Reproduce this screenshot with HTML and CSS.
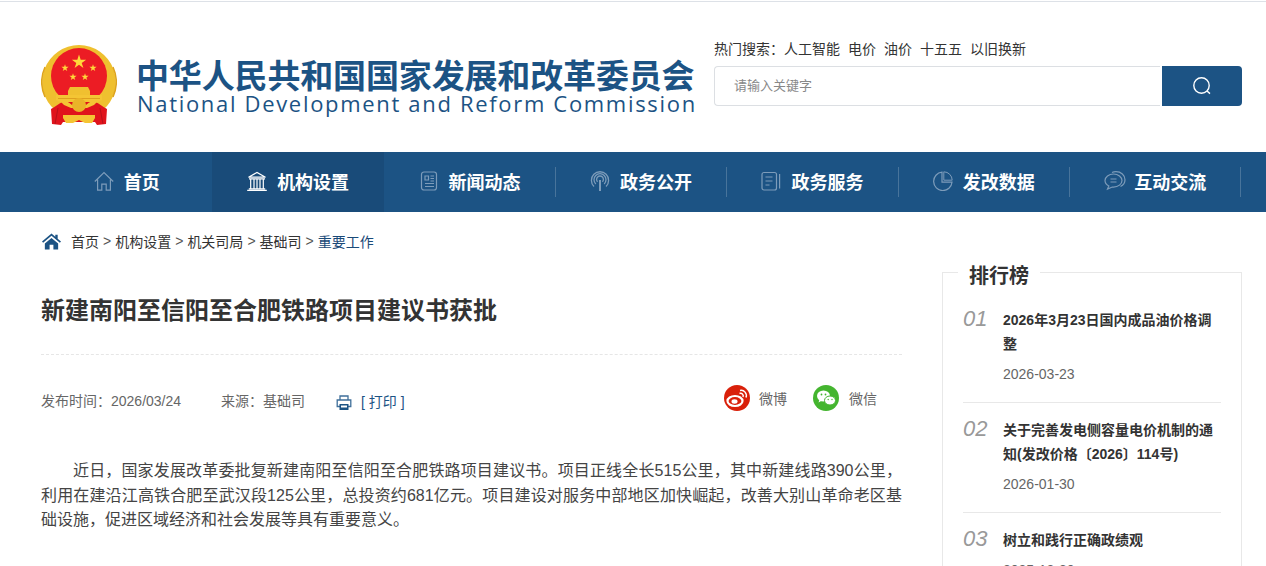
FILE: index.html
```html
<!DOCTYPE html>
<html lang="zh-CN">
<head>
<meta charset="utf-8">
<title>新建南阳至信阳至合肥铁路项目建议书获批</title>
<link rel="stylesheet" href="styles.css">
</head>
<body>
<header class="header">
  <div class="wrap header-in">
    <div class="logo">
      <svg class="emblem" viewBox="0 0 76 82" width="76" height="82">
        <defs><polygon id="st" points="0,-1 .225,-.309 .951,-.309 .363,.118 .588,.809 0,.382 -.588,.809 -.363,.118 -.951,-.309 -.225,-.309"/></defs>
        <path fill="#efc02f" d="M38 0a37 37 0 0 1 24 65H14A37 37 0 0 1 38 0z"/>
        <path d="M4 52a37 37 0 0 1 0-30M72 22a37 37 0 0 1 0 30" fill="none" stroke="#dda31c" stroke-width="1.500"/>
        <circle cx="38" cy="31" r="28" fill="#ec1c24"/>
        <use href="#st" fill="#ffd83a" transform="translate(38 17) scale(7.500)"/>
        <use href="#st" fill="#ffd83a" transform="translate(24 23) scale(3.800)"/>
        <use href="#st" fill="#ffd83a" transform="translate(52 23) scale(3.800)"/>
        <use href="#st" fill="#ffd83a" transform="translate(32 32) scale(3.800)"/>
        <use href="#st" fill="#ffd83a" transform="translate(44 32) scale(3.800)"/>
        <path fill="#f0c030" d="M27 50v-4l2-4h18l2 4v4z"/>
        <path fill="#f4c534" d="M15 50h46v5l-4 2H19l-4-2z"/>
        <path fill="#de9f1f" d="M17 53h42v1H17z"/>
        <path fill="#e0141c" d="M10 64c4-2 8-6 12-7h32c4 1 8 5 12 7l-1 15-9 1-2-3H22l-2 3-9-1z"/>
        <path fill="#b8111a" d="M17 63l-3 16M59 63l3 16" stroke="#b8111a" stroke-width="1"/>
        <path fill="#f4c534" d="M19 56c7-1 9 2 12 4h14c3-2 5-5 12-4l-4 4-7 3H30l-7-3z"/>
        <circle cx="38" cy="60" r="7" fill="#eab428"/>
        <path fill="#f4c534" d="M22 70h32v3l-3 5H44l-6-3-6 3h-7l-3-5z"/>
      </svg>
      <div class="logo-text">
        <div class="logo-cn">中华人民共和国国家发展和改革委员会</div>
        <div class="logo-en">National Development and Reform Commission</div>
      </div>
    </div>
    <div class="search">
      <div class="hot">
        <span>热门搜索：</span><a>人工智能</a><a>电价</a><a>油价</a><a>十五五</a><a>以旧换新</a>
      </div>
      <div class="search-box">
        <div class="search-input">请输入关键字</div>
        <div class="search-btn">
          <svg viewBox="0 0 20 20" width="20" height="20" fill="none" stroke="#fff" stroke-width="1.4"><circle cx="9.500" cy="9.500" r="7.700"/><path d="M15 15l3 2.600"/></svg>
        </div>
      </div>
    </div>
  </div>
</header>

<nav class="nav">
  <div class="wrap nav-in">
    <a class="nav-item">
      <svg class="nav-ico" viewBox="0 0 20 20" fill="none" stroke="#7d9cba" stroke-width="1.200"><path d="M.8 10.500L10 1.500l9.200 9M3.600 8.500v10.700h4.200v-6h4.400v6h4.200V8.500"/></svg>
      首页
    </a>
    <a class="nav-item active">
      <svg class="nav-ico" viewBox="0 0 20 20" fill="none" stroke="#fff" stroke-width="1.200"><path d="M1.500 6.200L10 1.500l8.500 4.700zM2 7.800h16M3.700 8.500v8.800M7 8.500v8.800M10 8.500v8.800M13 8.500v8.800M16.300 8.500v8.800M1.800 17.800h16.400M.2 19.400h19.600"/></svg>
      机构设置
    </a>
    <a class="nav-item">
      <svg class="nav-ico" viewBox="0 0 20 20" fill="none" stroke="#7d9cba" stroke-width="1.200"><rect x="2.500" y="1" width="15" height="18" rx="2.500"/><path d="M6 5h3.500v4H6zM11.500 5H15M11.500 7.500H15M11.500 10H15M6 12.500h9M6 15.500h9"/></svg>
      新闻动态
    </a>
    <a class="nav-item">
      <svg class="nav-ico" viewBox="0 0 20 20" fill="none" stroke="#7d9cba" stroke-width="1.300"><path d="M4 15.500a8.600 8.600 0 1 1 12 0M5.800 13a6 6 0 1 1 8.400 0M7.600 10.800a3.400 3.400 0 1 1 4.800 0"/><path stroke-width="2" d="M10 9v11"/></svg>
      政务公开
    </a>
    <a class="nav-item">
      <svg class="nav-ico" viewBox="0 0 20 20" fill="none" stroke="#7d9cba" stroke-width="1.200"><rect x="1" y="1.500" width="14.500" height="17.500" rx="2"/><path d="M18.600 3v14.500M4.500 6h7M4.500 10h7M4.500 14h4"/></svg>
      政务服务
    </a>
    <a class="nav-item">
      <svg class="nav-ico" viewBox="0 0 20 20" fill="none" stroke="#7d9cba" stroke-width="1.200"><path d="M9 1.200a9.200 9.200 0 1 0 10 10H9z"/><path d="M10.800.8v8.400h8.400A8.500 8.500 0 0 0 10.800.8z" stroke-width="1"/></svg>
      发改数据
    </a>
    <a class="nav-item">
      <svg class="nav-ico wide" viewBox="0 0 22 20" fill="none" stroke="#7d9cba" stroke-width="1.200"><path d="M9.500 3C4.800 3 1 5.900 1 9.500c0 2.300 1.500 4.300 3.800 5.500L3.500 18l4.800-2c.4 0 .8.100 1.200.100 4.700 0 8.500-3 8.500-6.600S14.200 3 9.500 3z"/><path d="M8 1.500c1-.5 2.500-.8 4-.8 5 0 9 3.500 9 8 0 3-1.800 5.500-4.500 6.800M6.500 8h6M6.500 11h6"/></svg>
      互动交流
    </a>
  </div>
</nav>

<div class="wrap">
  <div class="crumb">
    <svg class="crumb-ico" viewBox="0 0 20 17" width="19" height="17"><path fill="#1c5384" d="M10 0l4 3.400V1.500h2.500v4L20 8.500l-1.200 1.300L10 2.500 1.200 9.800 0 8.500zM3 10.500l7-5.800 7 5.800V17h-5v-5H8v5H3z"/></svg>
    <a>首页</a><i>&gt;</i><a>机构设置</a><i>&gt;</i><a>机关司局</a><i>&gt;</i><a>基础司</a><i>&gt;</i><a class="cur">重要工作</a>
  </div>

  <div class="main">
    <article class="article">
      <h1 class="title">新建南阳至信阳至合肥铁路项目建议书获批</h1>
      <div class="meta">
        <div class="meta-left">
          <span class="date">发布时间：2026/03/24</span>
          <span class="source">来源：基础司</span>
          <a class="print">
            <svg viewBox="0 0 16 15" width="16" height="15"><path fill="none" stroke="#3f6f9a" stroke-width="1.300" d="M4 4.500V1h8v3.500M4 11.500H1.200V5h13.600v6.500H12"/><path fill="#1c5384" d="M3.500 9h9v6h-9z"/><path fill="#fff" d="M5 10.500h6v2H5z"/></svg>
            <span>[ 打印 ]</span>
          </a>
        </div>
        <div class="share">
          <a class="share-item">
            <span class="round weibo">
              <svg viewBox="0 0 26 26" width="26" height="26" fill="none"><ellipse cx="11" cy="16" rx="7.500" ry="5" stroke="#fff" stroke-width="2.200"/><ellipse cx="10.500" cy="16.500" rx="3" ry="2.200" fill="#fff"/><path d="M15.500 8.500c2-1 4.500 1 3.500 3.500M16 5.500c4-1 7.500 3 6 7" stroke="#fff" stroke-width="1.500"/></svg>
            </span>微博
          </a>
          <a class="share-item">
            <span class="round wechat">
              <svg viewBox="0 0 26 26" width="26" height="26"><ellipse cx="10.500" cy="11" rx="6.500" ry="5.500" fill="#fff"/><path d="M6.500 14.500l-1 3 3.500-2z" fill="#fff"/><ellipse cx="17" cy="15.500" rx="5.500" ry="4.500" fill="#fff" stroke="#44b52f"/><circle cx="8.500" cy="9.500" r=".9" fill="#44b52f"/><circle cx="12.500" cy="9.500" r=".9" fill="#44b52f"/><circle cx="15.200" cy="14.500" r=".7" fill="#44b52f"/><circle cx="19" cy="14.500" r=".7" fill="#44b52f"/></svg>
            </span>微信
          </a>
        </div>
      </div>
      <p class="body">近日，国家发展改革委批复新建南阳至信阳至合肥铁路项目建议书。项目正线全长515公里，其中新建线路390公里，利用在建沿江高铁合肥至武汉段125公里，总投资约681亿元。项目建设对服务中部地区加快崛起，改善大别山革命老区基础设施，促进区域经济和社会发展等具有重要意义。</p>
    </article>

    <aside class="rank">
      <h2 class="rank-title">排行榜</h2>
      <div class="rank-item">
        <span class="rank-no">01</span>
        <div class="rank-text">
          <a class="rank-link">2026年3月23日国内成品油价格调整</a>
          <div class="rank-date">2026-03-23</div>
        </div>
      </div>
      <div class="rank-item">
        <span class="rank-no">02</span>
        <div class="rank-text">
          <a class="rank-link">关于完善发电侧容量电价机制的通知(发改价格〔2026〕114号)</a>
          <div class="rank-date">2026-01-30</div>
        </div>
      </div>
      <div class="rank-item">
        <span class="rank-no">03</span>
        <div class="rank-text">
          <a class="rank-link">树立和践行正确政绩观</a>
          <div class="rank-date">2025-12-30</div>
        </div>
      </div>
    </aside>
  </div>
</div>
</body>
</html>
```

FILE: styles.css
```css
* { box-sizing: border-box; }
html, body { margin: 0; height: 566px; overflow: hidden; background: #fff; }
body {
  padding: 1px 0 0;
  font-family: "Liberation Sans", "Noto Sans CJK SC", sans-serif;
  font-size: 14px;
  color: #333;
}
.wrap { width: 1201px; margin-left: 41px; }

.header { height: 151px; border-top: 1px solid #dde1e7; }
.header-in { display: flex; justify-content: space-between; height: 100%; }
.logo { display: flex; align-items: flex-start; padding-top: 43px; }
.emblem { flex: none; }
.logo-text { margin-left: 19px; padding-top: 12px; color: #1c5384; width: 560px; }
.logo-cn {
  font-family: "Noto Sans CJK SC", sans-serif;
  font-weight: 700;
  font-size: 33px;
  line-height: 34px;
  letter-spacing: -.15px;
  white-space: nowrap;
}
.logo-en {
  font-family: "Open Sans", sans-serif;
  font-size: 22px;
  line-height: 24px;
  letter-spacing: 1.68px;
  white-space: nowrap;
  padding-left: 1px;
}
.search { width: 528px; padding-top: 38px; }
.hot { height: 26px; line-height: 18px; color: #333; white-space: nowrap; font-size: 14px; }
.hot a { margin-right: 8px; }
.search-box { display: flex; height: 40px; }
.search-input {
  width: 446px;
  border: 1px solid #dcdfe3;
  border-right: 0;
  border-radius: 4px 0 0 4px;
  padding-left: 19px;
  line-height: 38px;
  font-size: 13px;
  color: #888;
}
.search-btn {
  width: 80px;
  margin-left: 2px;
  background: #1c5384;
  border-radius: 0 4px 4px 0;
  display: flex;
  align-items: center;
  justify-content: center;
}

.nav { height: 60px; background: #1c5384; }
.nav-in { display: flex; height: 100%; width: 1200px; }
.nav-item {
  flex: 0 0 171.43px;
  height: 100%;
  padding: 0 0 2px 0;
  display: flex;
  align-items: center;
  justify-content: center;
  gap: 10px;
  color: #fff;
  font-family: "Noto Sans CJK SC", sans-serif;
  font-size: 18px;
  font-weight: 700;
  position: relative;
}
.nav-item::after {
  content: "";
  position: absolute;
  right: -.5px;
  top: 15px;
  height: 30px;
  width: 1px;
  background: #48749b;
}
.nav-item.active { background: #194b79; }
.nav-item.active::after { display: none; }
.nav-ico { width: 20px; height: 20px; flex: none; }
.nav-ico.wide { width: 22px; margin-right: -2px; }

.crumb { display: flex; align-items: center; height: 60px; padding-bottom: 2px; font-size: 14px; color: #333; }
.crumb-ico { margin: 0 10px 0 1px; flex: none; }
.crumb i { font-style: normal; margin: 0 4px; color: #555; }
.crumb .cur { color: #1a4a78; }

.main { display: flex; justify-content: space-between; }
.article { width: 861px; }
.title {
  margin: 0;
  padding-top: 20px;
  height: 83px;
  border-bottom: 1px dashed #e6e6e6;
  font-family: "Noto Sans CJK SC", sans-serif;
  font-size: 24px;
  line-height: 34px;
  font-weight: 700;
  color: #333;
}
.meta { display: flex; justify-content: space-between; align-items: center; height: 88px; font-size: 14px; color: #666; }
.meta-left { display: flex; align-items: center; margin-top: 2px; }
.source { margin-left: 40px; }
.print { display: flex; align-items: center; margin-left: 31px; padding-top: 2px; color: #1c5384; }
.print svg { margin-top: 2px; }
.print span { margin-left: 9px; }
.share { display: flex; padding-right: 25px; margin-bottom: 2px; }
.share-item { display: flex; align-items: center; margin-left: 26px; color: #666; }
.round {
  width: 26px; height: 26px; border-radius: 50%;
  margin-right: 10px;
  display: block;
}
.round svg { display: block; }
.weibo { background: #d9200a; margin-right: 9px; }
.wechat { background: #44b52f; }
.body {
  margin: 16px 0 0;
  font-size: 16px;
  line-height: 24.5px;
  text-indent: 32px;
  color: #444;
  text-align: justify;
}

.rank {
  width: 300px;
  height: 400px;
  border: 1px solid #e8e8e8;
  border-bottom: 0;
  padding: 0 20px;
  position: relative;
}
.rank-title {
  position: absolute;
  left: 15px;
  top: -13px;
  margin: 0;
  padding: 0 11px;
  background: #fff;
  font-family: "Noto Sans CJK SC", sans-serif;
  font-size: 20px;
  line-height: 30px;
  font-weight: 700;
  color: #333;
}
.rank-item {
  display: flex;
  margin-bottom: 15px;
  padding-bottom: 16px;
  border-bottom: 1px solid #e8e8e8;
}
.rank-item:first-of-type { margin-top: 35px; }
.rank-no {
  flex: 0 0 40px;
  font-style: italic;
  font-size: 22px;
  line-height: 22px;
  color: #999;
}
.rank-link {
  display: block;
  font-size: 14px;
  font-weight: 700;
  line-height: 24px;
  color: #333;
}
.rank-date { margin-top: 6px; line-height: 24px; color: #666; font-size: 14px; }
```
